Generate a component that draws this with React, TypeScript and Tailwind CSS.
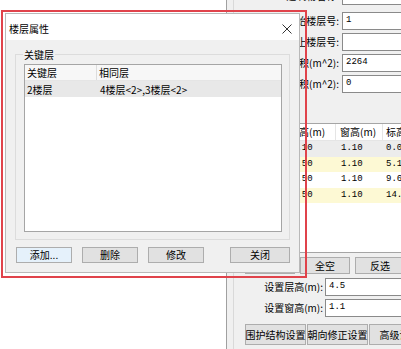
import { ReactNode } from "react";

function Field({
  label,
  value,
  labelClass,
  className = "",
}: {
  label: string;
  value: string;
  labelClass: string;
  className?: string;
}) {
  return (
    <div className={`flex h-[18px] shrink-0 items-center ${className}`}>
      <div className={`shrink-0 whitespace-nowrap text-right text-[10px] leading-none ${labelClass}`}>{label}</div>
      <div className="h-[18px] w-[80px] shrink-0 border border-[#8a8a8a] bg-white pl-[3px] pt-[1px] font-['Liberation_Mono',monospace] text-[9px] leading-[12px]">
        {value}
      </div>
    </div>
  );
}

function Btn({ children, className = "" }: { children?: ReactNode; className?: string }) {
  return (
    <div
      className={`flex shrink-0 items-center justify-center whitespace-nowrap border border-[#adadad] bg-[#e1e1e1] text-[10px] leading-none ${className}`}
    >
      {children}
    </div>
  );
}

const rows = [
  { a: "1", b: "3.10", c: "1.10", d: "0.00", bg: "bg-[#ececec]", h: "h-[16px]" },
  { a: "2", b: "4.50", c: "1.10", d: "5.10", bg: "bg-[#fdf9d4]", h: "h-[15px]" },
  { a: "3", b: "4.50", c: "1.10", d: "9.60", bg: "bg-white", h: "h-[16px]" },
  { a: "4", b: "4.50", c: "1.10", d: "14.10", bg: "bg-[#fdf9d4]", h: "h-[15px]" },
];

export default function App() {
  return (
    <div className="relative h-[349px] w-[401px] overflow-hidden bg-white font-['Noto_Sans_CJK_SC','Noto_Sans',sans-serif] text-[10px] text-black">
      {/* main window behind the dialog */}
      <div className="flex h-full">
        <div className="w-[227px] shrink-0 border-r border-[#a0a0a0] bg-white" />
        <div className="w-[6px] shrink-0 bg-[#f0f0f0]" />
        <div className="flex min-w-0 flex-1 flex-col border-l border-[#d9d9d9] bg-[#f0f0f0]">
          <Field label="建筑物名称:" value="楼" labelClass="w-[108px] pr-[3px]" className="-mt-[13px]" />
          <Field label="起始楼层号:" value="1" labelClass="w-[108px] pr-[3px]" className="mt-[7px]" />
          <Field label="终止楼层号:" value="" labelClass="w-[108px] pr-[3px]" className="mt-[3px]" />
          <Field label="建筑面积(m^2):" value="2264" labelClass="w-[108px] pr-[3px]" className="mt-[3px]" />
          <Field label="房间面积(m^2):" value="0" labelClass="w-[108px] pr-[3px]" className="mt-[3px]" />

          <div className="ml-[6px] mt-[30px] h-[130px] w-[180px] shrink-0 border border-[#a5a5a5] bg-white">
            <div className="flex h-[17px] items-center border-b border-[#e5e5e5] bg-white">
              <div className="h-full w-[45px] border-r border-[#e5e5e5] pl-[3px] leading-[16px]">层号</div>
              <div className="h-full w-[50px] border-r border-[#e5e5e5] pl-[3px] leading-[16px]">层高(m)</div>
              <div className="h-full w-[47px] border-r border-[#e5e5e5] pl-[4px] leading-[16px]">窗高(m)</div>
              <div className="h-full flex-1 whitespace-nowrap pl-[3px] leading-[16px]">标高</div>
            </div>
            {rows.map((r) => (
              <div key={r.a} className={`flex items-center font-['Liberation_Mono',monospace] text-[9px] ${r.bg} ${r.h}`}>
                <div className="w-[45px] pl-[3px]">{r.a}</div>
                <div className="w-[50px] pl-[5px]">{r.b}</div>
                <div className="w-[47px] pl-[5px]">{r.c}</div>
                <div className="flex-1 pl-[3px]">{r.d}</div>
              </div>
            ))}
          </div>

          <div className="mt-[4px] flex h-[17px] shrink-0 gap-[5px] pl-[11px]">
            <Btn className="w-[50px]" />
            <Btn className="w-[50px]">全空</Btn>
            <Btn className="w-[50px]">反选</Btn>
          </div>

          <Field label="设置层高(m):" value="4.5" labelClass="w-[91px] pr-[2px]" className="mt-[4px]" />
          <Field label="设置窗高(m):" value="1.1" labelClass="w-[91px] pr-[2px]" className="mt-[3px]" />

          <div className="mt-[7px] flex h-[21px] shrink-0 gap-[1px] pl-[11px]">
            <Btn className="w-[61px] text-[9.5px]">围护结构设置</Btn>
            <Btn className="w-[61px] text-[9.5px]">朝向修正设置</Btn>
            <Btn className="w-[61px] text-[9.5px]">高级设置</Btn>
          </div>
        </div>
      </div>

      {/* red annotation frame with the dialog */}
      <div className="absolute left-[1px] top-[10px] h-[268px] w-[306px] border-2 border-[#e0434b]">
        <div className="ml-[2px] mt-[1px] flex h-[260px] w-[295px] flex-col border border-[#b9b9b9] bg-white">
          <div className="flex h-[26px] shrink-0 items-center justify-between pl-[3px] pr-[7px] pt-[3px]">
            <span className="text-[10px]">楼层属性</span>
            <svg width="10" height="10" viewBox="0 0 10 10" className="text-[#333]">
              <path d="M0.5 0.5 L9.5 9.5 M9.5 0.5 L0.5 9.5" stroke="currentColor" strokeWidth="1" />
            </svg>
          </div>
          <div className="flex flex-1 flex-col bg-[#f0f0f0] px-[9px] pt-[14px]">
            <div className="relative h-[186px] w-[275px] shrink-0 border border-[#dcdcdc]">
              <span className="absolute -top-[7px] left-[7px] bg-[#f0f0f0] px-[1px] leading-[14px]">关键层</span>
              <div className="ml-[8px] mt-[9px] h-[168px] w-[258px] border border-[#a5a5a5] bg-white">
                <div className="flex h-[16px] items-center border-b border-[#e5e5e5] bg-[#f7f7f7]">
                  <div className="h-full w-[72px] border-r border-[#dcdcdc] pl-[2px] leading-[15px]">关键层</div>
                  <div className="pl-[2px]">相同层</div>
                </div>
                <div className="flex h-[16px] items-center bg-[#e8e8e8]">
                  <div className="w-[73px] pl-[2px]">2楼层</div>
                  <div className="pl-[2px]">4楼层&lt;2&gt;,3楼层&lt;2&gt;</div>
                </div>
              </div>
            </div>
            <div className="mt-[7px] flex h-[16px] w-[275px] shrink-0 gap-[10px] pl-[1px]">
              <Btn className="w-[56px] border-[#0078d7] bg-[#e5f1fb]">添加...</Btn>
              <Btn className="w-[56px]">删除</Btn>
              <Btn className="w-[56px]">修改</Btn>
              <Btn className="ml-auto w-[60px]">关闭</Btn>
            </div>
          </div>
        </div>
      </div>
    </div>
  );
}
